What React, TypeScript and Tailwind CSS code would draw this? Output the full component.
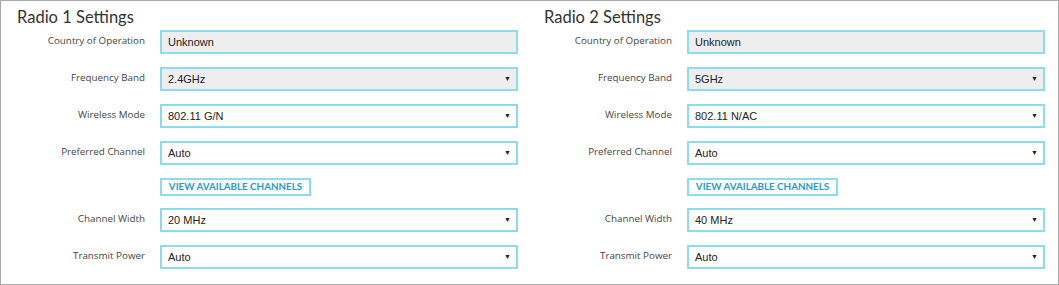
const rows1 = [
  { label: "Country of Operation", value: "Unknown", kind: "readonly" },
  { label: "Frequency Band", value: "2.4GHz", kind: "disabled" },
  { label: "Wireless Mode", value: "802.11 G/N", kind: "select" },
  { label: "Preferred Channel", value: "Auto", kind: "select" },
  { label: "", value: "", kind: "button" },
  { label: "Channel Width", value: "20 MHz", kind: "select" },
  { label: "Transmit Power", value: "Auto", kind: "select" },
];

const rows2 = [
  { label: "Country of Operation", value: "Unknown", kind: "readonly" },
  { label: "Frequency Band", value: "5GHz", kind: "disabled" },
  { label: "Wireless Mode", value: "802.11 N/AC", kind: "select" },
  { label: "Preferred Channel", value: "Auto", kind: "select" },
  { label: "", value: "", kind: "button" },
  { label: "Channel Width", value: "40 MHz", kind: "select" },
  { label: "Transmit Power", value: "Auto", kind: "select" },
];

type Row = { label: string; value: string; kind: string };

function Field({ row }: { row: Row }) {
  if (row.kind === "button") {
    return (
      <div className="flex h-[30px] items-start">
        <div className="w-[144px]" />
        <button className="ml-[15px] h-[18px] w-[151px] whitespace-nowrap border-2 border-[#8ddcee] bg-white text-[9.8px] font-bold leading-none text-[#2a9bc8] [font-family:Lato,sans-serif]">
          VIEW AVAILABLE CHANNELS
        </button>
      </div>
    );
  }
  const grey = row.kind !== "select";
  return (
    <div className="flex h-[37px] items-start">
      <div className="w-[144px] pt-[4px] text-right text-[9.8px] text-[#444] [font-family:'Open_Sans',sans-serif]">
        {row.label}
      </div>
      <div
        className={`ml-[15px] flex h-[24px] w-[358px] items-center justify-between border-2 border-[#8ddcee] pl-[6px] pr-[5px] text-[11px] text-[#222] [font-family:'Liberation_Sans',Arial,sans-serif] ${
          grey ? "bg-[#eeeeee]" : "bg-white"
        }`}
      >
        <span>{row.value}</span>
        {row.kind !== "readonly" && (
          <span className="text-[7px] text-[#222]">▼</span>
        )}
      </div>
    </div>
  );
}

function Panel({ title, rows }: { title: string; rows: Row[] }) {
  return (
    <div className="w-[527px]">
      <h2 className="h-[29px] pl-[16px] pt-[6px] text-[16.5px] leading-[20px] text-[#333] [font-family:Lato,sans-serif]">
        {title}
      </h2>
      {rows.map((r, i) => (
        <Field key={i} row={r} />
      ))}
    </div>
  );
}

export default function App() {
  return (
    <div className="h-[285px] w-[1059px] border border-[#aaaaaa] bg-white">
      <div className="flex">
        <Panel title="Radio 1 Settings" rows={rows1} />
        <Panel title="Radio 2 Settings" rows={rows2} />
      </div>
    </div>
  );
}
